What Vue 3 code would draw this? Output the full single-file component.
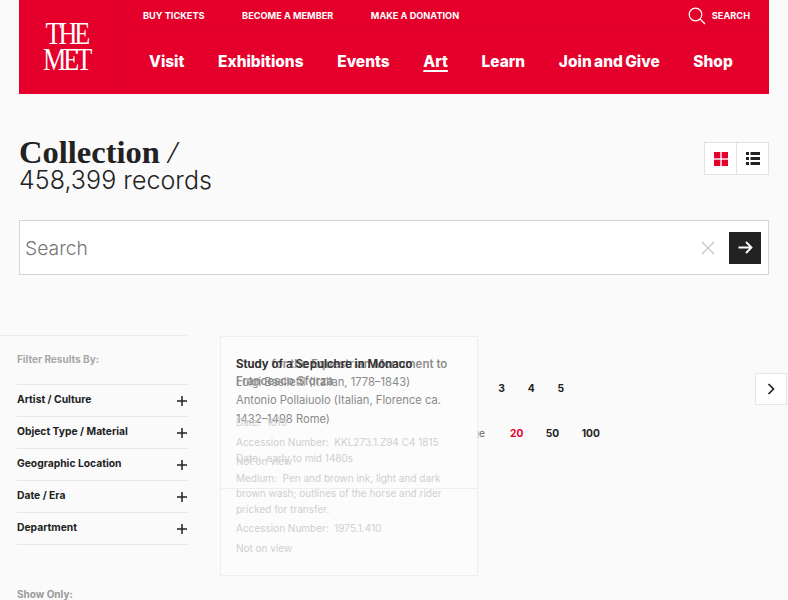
<script setup>
const utility = ['BUY TICKETS', 'BECOME A MEMBER', 'MAKE A DONATION']
const nav = [
  { label: 'Visit' }, { label: 'Exhibitions' }, { label: 'Events' },
  { label: 'Art', active: true }, { label: 'Learn' }, { label: 'Join and Give' }, { label: 'Shop' }
]
const filters = ['Artist / Culture', 'Object Type / Material', 'Geographic Location', 'Date / Era', 'Department']
const pages = [1, 2, 3, 4, 5]
const sizes = [{ n: 20, active: true }, { n: 50 }, { n: 100 }]
</script>

<template>
  <div class="page">
    <header class="header">
      <div class="logo"><span>THE</span><span>MET</span></div>
      <div class="header-main">
        <div class="utility">
          <a v-for="u in utility" :key="u">{{ u }}</a>
          <div class="util-search">
            <svg width="18" height="18" viewBox="0 0 18 18" fill="none" stroke="#fff" stroke-width="1.2">
              <circle cx="7.5" cy="7.5" r="6.3" />
              <path d="M12 12l5 5" />
            </svg>
            <span>SEARCH</span>
          </div>
        </div>
        <nav class="nav">
          <a v-for="n in nav" :key="n.label" :class="{ active: n.active }">{{ n.label }}</a>
        </nav>
      </div>
    </header>

    <section class="title-row">
      <h1 class="title"><span class="coll"><b>Collection</b> <i>/</i></span><span class="count">458,399 records</span></h1>
      <div class="toggle">
        <div class="cell">
          <svg width="14" height="14" viewBox="0 0 14 14" fill="#e4002b">
            <rect width="6.3" height="6.3" /><rect x="7.7" width="6.3" height="6.3" />
            <rect y="7.7" width="6.3" height="6.3" /><rect x="7.7" y="7.7" width="6.3" height="6.3" />
          </svg>
        </div>
        <div class="cell">
          <svg width="14" height="13" viewBox="0 0 14 13" fill="#222">
            <rect width="3" height="3" /><rect x="4.5" width="9.5" height="3" />
            <rect y="5" width="3" height="3" /><rect x="4.5" y="5" width="9.5" height="3" />
            <rect y="10" width="3" height="3" /><rect x="4.5" y="10" width="9.5" height="3" />
          </svg>
        </div>
      </div>
    </section>

    <section class="search">
      <span class="placeholder">Search</span>
      <svg class="clear" width="14" height="14" viewBox="0 0 14 14" stroke="#c9c9c9" stroke-width="1.3" fill="none">
        <path d="M1 1l12 12M13 1L1 13" />
      </svg>
      <div class="go">
        <svg width="15" height="13" viewBox="0 0 15 13" fill="none" stroke="#fff" stroke-width="1.8">
          <path d="M0.5 6.5h13M8 1l5.5 5.5L8 12" />
        </svg>
      </div>
    </section>

    <main class="main">
      <aside class="sidebar">
        <h2 class="side-head">Filter Results By:</h2>
        <ul class="filters">
          <li v-for="f in filters" :key="f">
            <span>{{ f }}</span>
            <svg width="10" height="10" viewBox="0 0 10 10" stroke="#222" stroke-width="1.5"><path d="M5 0v10M0 5h10" /></svg>
          </li>
        </ul>
        <h2 class="side-head only">Show Only:</h2>
      </aside>

      <div class="content">
        <div class="pager-row">
          <div class="pages"><span v-for="p in pages" :key="p">{{ p }}</span></div>
          <button class="next">
            <svg width="8" height="12" viewBox="0 0 8 12" fill="none" stroke="#222" stroke-width="1.7"><path d="M1.5 1l5 5-5 5" /></svg>
          </button>
        </div>
        <div class="size-row">
          <span class="size-label">Results per page</span>
          <span v-for="s in sizes" :key="s.n" class="size" :class="{ active: s.active }">{{ s.n }}</span>
        </div>

        <article class="card card-b">
          <h3>Study for the Equestrian Monument to Francesco Sforza</h3>
          <p class="artist">Antonio Pollaiuolo (Italian, Florence ca. 1432–1498 Rome)</p>
          <p class="meta">Date:&nbsp; early to mid 1480s</p>
          <p class="meta">Medium:&nbsp; Pen and brown ink, light and dark brown wash; outlines of the horse and rider pricked for transfer.</p>
          <p class="meta">Accession Number:&nbsp; 1975.1.410</p>
          <p class="meta">Not on view</p>
        </article>
        <article class="card card-a">
          <h3>Study of a Sepulchre in Monaco</h3>
          <p class="artist">Luigi Basiletti (Italian, 1778–1843)</p>
          <p class="meta date-a">Date:&nbsp; 1815</p>
          <p class="meta">Accession Number:&nbsp; KKL273.1.Z94 C4 1815</p>
          <p class="meta">Not on view</p>
        </article>
      </div>
    </main>
  </div>
</template>

<style>
html, body { margin: 0; background: #fafafa; }
</style>

<style scoped>
.page {
  width: 788px;
  height: 600px;
  overflow: hidden;
  background: #fafafa;
  font-family: Inter, "Liberation Sans", sans-serif;
  color: #222;
}
.header {
  margin-left: 19px;
  width: 750px;
  height: 94px;
  background: #e4002b;
  display: flex;
  color: #fff;
}
.logo {
  width: 94px;
  flex: none;
  box-sizing: border-box;
  margin-right: 2px;
  padding-top: 20px;
  display: flex;
  flex-direction: column;
  align-items: center;
  font-family: "Liberation Serif", serif;
  font-size: 32px;
  line-height: 26px;
  letter-spacing: -3.8px;
}
.logo span { display: block; transform: scaleX(0.82); }
.header-main { flex: 1; display: flex; flex-direction: column; border-left: 1px solid #e00029; margin-left: -1px; }
.utility {
  height: 31px;
  border-bottom: 1px solid #e00029;
  display: flex;
  align-items: center;
  padding-left: 28px;
  gap: 37.5px;
  font-size: 9.2px;
  font-weight: 700;
}
.util-search {
  margin-left: auto;
  margin-right: 19px;
  display: flex;
  align-items: center;
  gap: 6px;
}
.util-search svg { margin-left: 3px; }
.nav {
  flex: 1;
  display: flex;
  align-items: center;
  padding: 0 0 3px 34px;
  gap: 33.7px;
  font-size: 15.45px;
  font-weight: 800;
  word-spacing: -1px;
}
.nav a.active {
  text-decoration: underline;
  text-underline-offset: 3px;
  text-decoration-thickness: 1.5px;
}
.title-row {
  margin: 0 19px;
  height: 126px;
  display: flex;
  justify-content: space-between;
  align-items: flex-start;
}
.title { margin: 41px 0 0; display: flex; flex-direction: column; font-weight: 400; color: #222; }
.coll {
  font-family: "Liberation Serif", serif;
  font-size: 32.5px;
  line-height: 34px;
}
.coll i { font-weight: 400; }
.count {
  font-size: 25px;
  line-height: 22px;
  font-weight: 300;
  font-family: Inter, sans-serif;
  letter-spacing: 0.05px;
}
.toggle {
  margin-top: 48px;
  display: flex;
  background: #fff;
  border: 1px solid #e2e2e2;
}
.cell {
  width: 31px;
  height: 31px;
  display: flex;
  align-items: center;
  justify-content: center;
}
.cell + .cell { border-left: 1px solid #e2e2e2; }
.search {
  margin: 0 19px;
  height: 55px;
  box-sizing: border-box;
  background: #fff;
  border: 1px solid #d4d4d4;
  display: flex;
  align-items: center;
  padding: 0 7px 0 5px;
}
.placeholder { flex: 1; font-size: 19.3px; color: #767676; font-weight: 300; }
.clear { margin-right: 14px; }
.go {
  width: 32px;
  height: 32px;
  background: #222;
  display: flex;
  align-items: center;
  justify-content: center;
}
.main { margin-top: 60px; display: flex; }
.sidebar {
  width: 187px;
  flex: none;
  box-sizing: border-box;
  padding-left: 17px;
  position: relative;
}
.sidebar::before {
  content: "";
  position: absolute;
  left: 0;
  right: 0;
  top: 0;
  border-top: 1px solid #ececec;
}
.side-head {
  margin: 0;
  padding-top: 18px;
  font-size: 10px;
  line-height: 12px;
  font-weight: 700;
  color: #a8a8a8;
}
.side-head.only { padding-top: 43px; color: #999; }
.filters {
  list-style: none;
  margin: 19px 0 0;
  padding: 0;
  border-top: 1px solid #e6e6e6;
}
.filters li {
  height: 31px;
  border-bottom: 1px solid #e6e6e6;
  display: flex;
  align-items: center;
  justify-content: space-between;
  font-size: 10.3px;
  font-weight: 700;
  color: #222;
}
.filters li span { margin-top: -4px; }
.filters li svg { margin-top: 0; }
.content { flex: 1; position: relative; padding-top: 38px; }
.pager-row { display: flex; align-items: flex-start; height: 32px; }
.pages {
  margin-left: 252px;
  margin-top: 9px;
  display: flex;
  gap: 22.6px;
  font-size: 10.3px;
  font-weight: 700;
}
.pages span { width: 7px; text-align: center; }
.next {
  position: absolute;
  left: 568px;
  top: 38px;
  width: 32px;
  height: 32px;
  padding: 0;
  background: #fff;
  border: 1px solid #e6e6e6;
  display: flex;
  align-items: center;
  justify-content: center;
}
.size-row {
  margin-top: 21px;
  display: flex;
  align-items: center;
  height: 14px;
  font-size: 10.2px;
  font-weight: 700;
}
.size-label { margin-left: 210px; width: 88px; font-weight: 400; text-align: right; color: #666; }
.size { margin-left: 22.5px; }
.size.active { color: #e4002b; margin-left: 25px; }
.card {
  position: absolute;
  left: 33px;
  top: 1px;
  width: 258px;
  box-sizing: border-box;
  padding: 19px 15px 0;
  border: 1px solid #efefef;
}
.card-a { height: 153px; background: none; }
.card-b { height: 240px; background: #fcfcfc; }
.card h3 {
  margin: 0;
  font-size: 11.5px;
  line-height: 17px;
  font-weight: 600;
}
.card-a h3 { color: #333; }
.card-b h3 { color: #8d8d8d; }
.artist { margin: 0; font-size: 11.2px; line-height: 19px; color: #8a8a8a; }
.meta { margin: 0 0 4px; font-size: 10px; line-height: 15.5px; color: #cfcfcf; }
.card-b .artist { margin-top: 1px; }
.card-b .artist + .meta { margin-top: 22px; }
.date-a { margin-top: 23px; }
</style>
